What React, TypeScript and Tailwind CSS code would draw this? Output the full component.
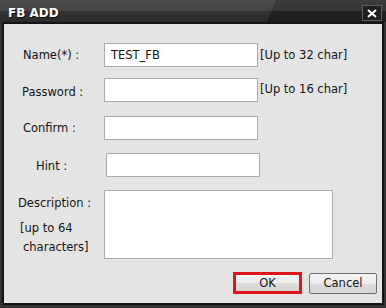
import { ReactNode } from 'react';

function Field({ className }: { className: string }) {
  return <div className={`h-[24px] border border-[#ababab] bg-white ${className}`} />;
}

function Row({
  label,
  labelClass,
  children,
}: {
  label: string;
  labelClass: string;
  children: ReactNode;
}) {
  return (
    <div className="flex items-center">
      <span className={`shrink-0 pt-[2px] ${labelClass}`}>{label}</span>
      {children}
    </div>
  );
}

export default function App() {
  return (
    <div className="flex h-[308px] w-[386px] flex-col bg-[#333333] font-['DejaVu_Sans',sans-serif] text-[11.5px] text-[#141414]">
      <header className="relative h-[22px] shrink-0 bg-[linear-gradient(#4b4b4b_0%,#444444_50%,#323232_52%,#2c2c2c_100%)]">
        <div className="absolute inset-0 bg-[linear-gradient(#3c3c3c_0%,#363636_50%,#222222_52%,#1c1c1c_100%)] [clip-path:polygon(276px_0,100%_0,100%_100%,267px_100%)]" />
        <div className="relative flex h-full items-center justify-between pl-[8px] pr-[4px]">
          <span className="pt-[3px] text-[12px] font-bold text-white [text-shadow:1px_1px_0_#101010]">
            FB ADD
          </span>
          <button className="mt-[4px] flex h-[16px] w-[20px] items-center justify-center border border-[#5e5e5e] bg-[#1d1d1d]">
            <svg width="10" height="9" viewBox="0 0 10 9">
              <path d="M1 1 L9 8 M9 1 L1 8" stroke="white" strokeWidth="2" />
            </svg>
          </button>
        </div>
      </header>
      <div className="flex flex-1 px-[2px] pb-[3px]">
        <main className="flex flex-1 flex-col border-2 border-[#141414] bg-[#e4e4e4] pt-[19px]">
          <Row label="Name(*) :" labelClass="w-[100px] pl-[19px]">
            <Field className="w-[154px]" />
            <span className="pl-[2px] pt-[2px]">[Up to 32 char]</span>
          </Row>
          <div className="-mt-[24px] flex h-[24px] items-center pl-[107px] pt-[1px] text-[#101010]">
            TEST_FB
          </div>
          <div className="mt-[11px]">
            <Row label="Password :" labelClass="w-[100px] pl-[18px] pt-[6px]">
              <Field className="w-[154px]" />
              <span className="pl-[2px]">[Up to 16 char]</span>
            </Row>
          </div>
          <div className="mt-[14px]">
            <Row label="Confirm :" labelClass="w-[100px] pl-[19px]">
              <Field className="w-[154px]" />
            </Row>
          </div>
          <div className="mt-[13px]">
            <Row label="Hint :" labelClass="w-[102px] pl-[32px] pt-[4px]">
              <Field className="w-[154px]" />
            </Row>
          </div>
          <div className="mt-[13px] flex">
            <div className="w-[100px] shrink-0 pt-[4px] leading-[19px]">
              <div className="pl-[14px]">Description :</div>
              <div className="pl-[16px] pt-[6px]">[up to 64</div>
              <div className="pl-[19px]">characters]</div>
            </div>
            <div className="h-[69px] w-[229px] border border-[#ababab] bg-white" />
          </div>
          <div className="mt-[13px] flex justify-end gap-[7px] pr-[5px]">
            <div className="border-[3px] border-[#e0141c]">
              <button className="flex h-[16px] w-[63px] items-center justify-center bg-[linear-gradient(#f4f4f4_0%,#ebebeb_50%,#dddddd_52%,#d4d4d4_100%)] pt-[1px]">
                OK
              </button>
            </div>
            <button className="mt-[1px] flex h-[21px] w-[68px] items-center justify-center rounded-[2px] border border-[#707070] bg-[linear-gradient(#f4f4f4_0%,#ebebeb_50%,#dddddd_52%,#d4d4d4_100%)] pt-[1px]">
              Cancel
            </button>
          </div>
        </main>
      </div>
    </div>
  );
}
